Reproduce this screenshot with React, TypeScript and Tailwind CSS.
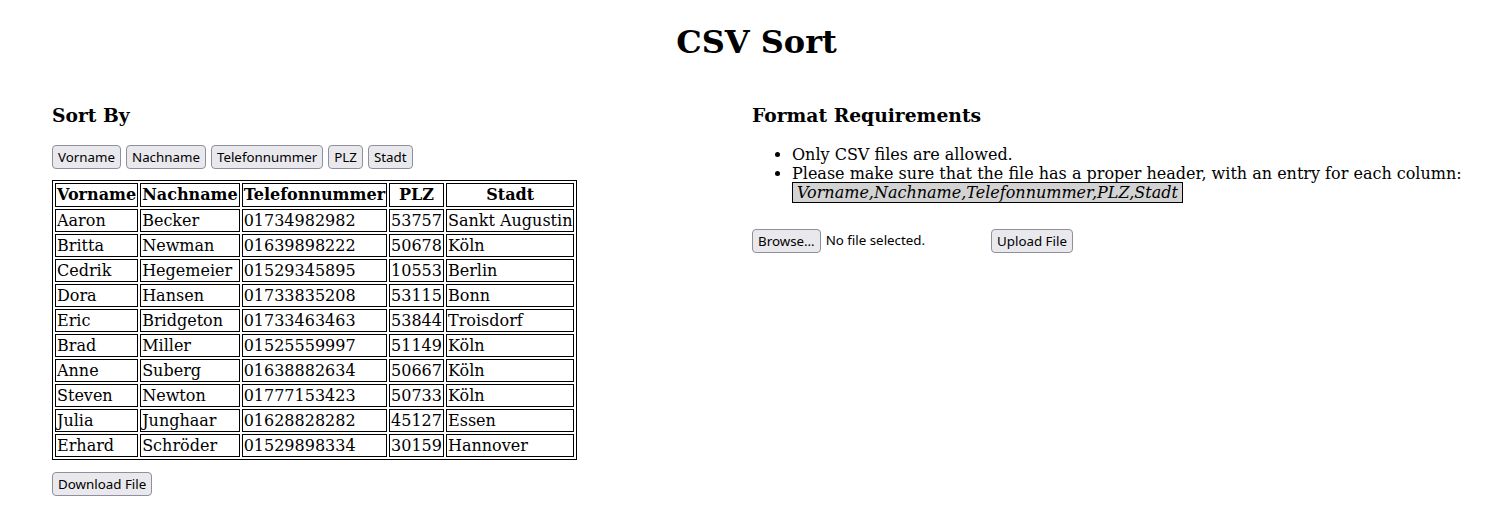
import React from "react";

const rows = [
  ["Aaron", "Becker", "01734982982", "53757", "Sankt Augustin"],
  ["Britta", "Newman", "01639898222", "50678", "Köln"],
  ["Cedrik", "Hegemeier", "01529345895", "10553", "Berlin"],
  ["Dora", "Hansen", "01733835208", "53115", "Bonn"],
  ["Eric", "Bridgeton", "01733463463", "53844", "Troisdorf"],
  ["Brad", "Miller", "01525559997", "51149", "Köln"],
  ["Anne", "Suberg", "01638882634", "50667", "Köln"],
  ["Steven", "Newton", "01777153423", "50733", "Köln"],
  ["Julia", "Junghaar", "01628828282", "45127", "Essen"],
  ["Erhard", "Schröder", "01529898334", "30159", "Hannover"],
];

const headers = ["Vorname", "Nachname", "Telefonnummer", "PLZ", "Stadt"];

function Btn({ children }: { children: React.ReactNode }) {
  return (
    <button className="h-[24px] px-[5px] pt-[1px] flex items-center bg-[#e9e9ed] border border-[#8f8f9d] rounded-[4px] text-[13.33px] font-['Noto_Sans',sans-serif] text-black leading-none">
      {children}
    </button>
  );
}

export default function App() {
  return (
    <div className="font-['DejaVu_Serif',serif] text-[16px] text-black bg-white min-h-[529px]">
      <h1 className="pt-[24px] pl-[4px] text-[32px] font-bold text-center leading-[37px]">CSV Sort</h1>
      <div className="mt-[43px] grid grid-cols-[700px_1fr] pl-[52px]">
        <div>
          <h3 className="text-[18.72px] font-bold leading-[22px]">Sort By</h3>
          <div className="mt-[19px] flex gap-[5px]">
            {headers.map((h) => (
              <Btn key={h}>{h}</Btn>
            ))}
          </div>
          <table className="mt-[11px] border-separate border-spacing-[2px] border border-black">
            <thead>
              <tr>
                {headers.map((h) => (
                  <th key={h} className="border border-black p-[1px] leading-[20px] font-bold text-center">
                    {h}
                  </th>
                ))}
              </tr>
            </thead>
            <tbody>
              {rows.map((r, i) => (
                <tr key={i}>
                  {r.map((c, j) => (
                    <td key={j} className="border border-black p-[1px] leading-[19px]">
                      {c}
                    </td>
                  ))}
                </tr>
              ))}
            </tbody>
          </table>
          <div className="mt-[12px] flex">
            <Btn>Download File</Btn>
          </div>
        </div>
        <div>
          <h3 className="text-[18.72px] font-bold leading-[22px]">Format Requirements</h3>
          <ul className="mt-[19px] list-disc pl-[40px] leading-[19px]">
            <li>Only CSV files are allowed.</li>
            <li>
              Please make sure that the file has a proper header, with an entry for each column:
              <br />
              <span className="italic bg-[#d3d3d3] border border-black px-[4px]">
                Vorname,Nachname,Telefonnummer,PLZ,Stadt
              </span>
            </li>
          </ul>
          <div className="mt-[27px] flex items-center">
            <div className="w-[239px] flex items-center gap-[5px]">
              <Btn>Browse…</Btn>
              <span className="text-[13.33px] font-['Noto_Sans',sans-serif]">No file selected.</span>
            </div>
            <Btn>Upload File</Btn>
          </div>
        </div>
      </div>
    </div>
  );
}
